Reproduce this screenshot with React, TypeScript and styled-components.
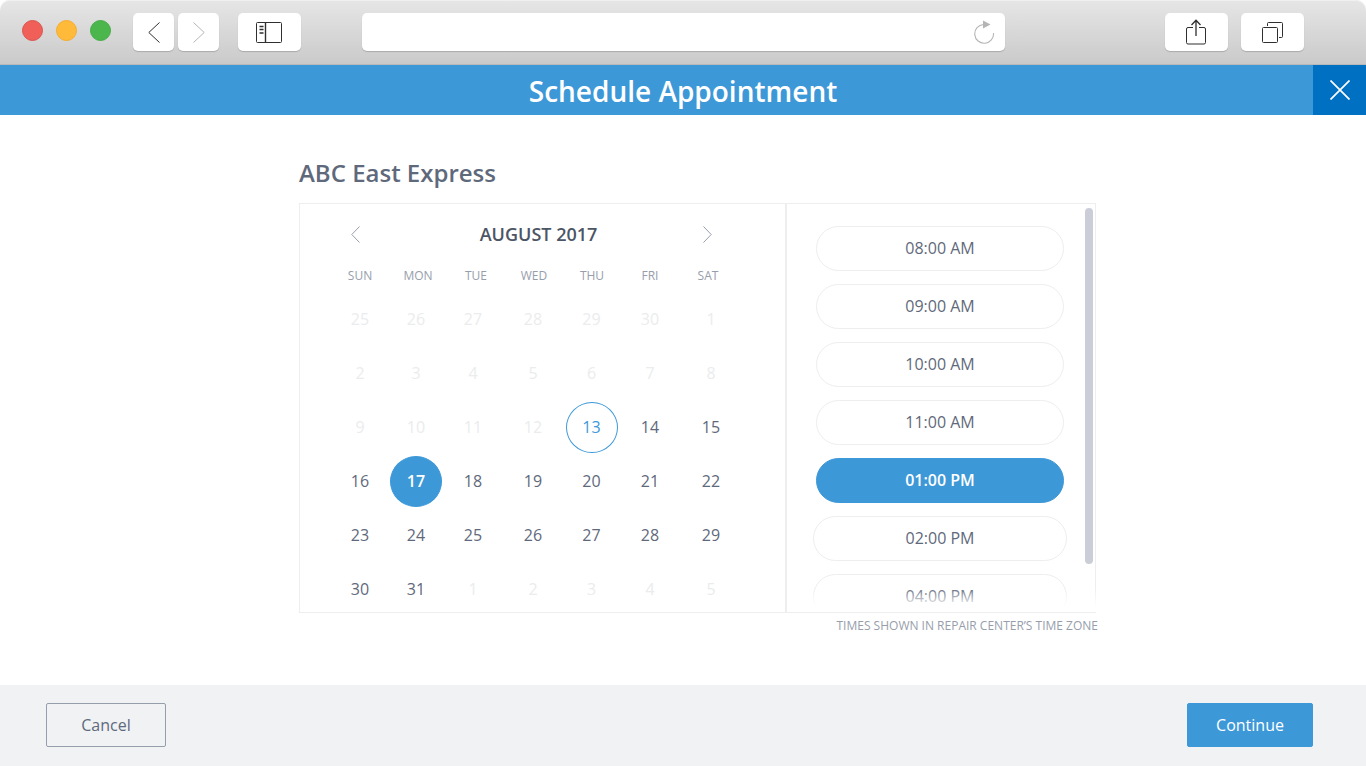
import React, { useState } from "react";
import styled, { createGlobalStyle, css } from "styled-components";

const color = {
  blue: "#3d98d8",
  deepBlue: "#0071c2",
  ink: "#4c5566",
  text: "#5f697c",
  muted: "#979eab",
  faint: "#ebeced",
  line: "#eeeeef",
  footer: "#f0f2f4",
};

const GlobalStyle = createGlobalStyle`
  * { box-sizing: border-box; }
  body {
    margin: 0;
    background: #fff;
    color: ${color.text};
    font-family: "Open Sans", "Noto Sans", sans-serif;
    font-size: 16px;
  }
  button, input { font: inherit; color: inherit; }
  button { padding: 0; border: 0; background: none; cursor: pointer; }
`;

const Page = styled.div`
  display: flex;
  flex-direction: column;
  min-height: 100vh;
`;

/* Browser chrome */

const Chrome = styled.header`
  display: flex;
  align-items: center;
  height: 65px;
  padding: 0 62px 0 22px;
  border-bottom: 1px solid #b9b9b9;
  border-radius: 10px 10px 0 0;
  background: linear-gradient(#e6e6e6, #cacaca);
  box-shadow: inset 0 1px 0 #f0f0f0;
`;

const Lights = styled.div`
  display: flex;
  gap: 13px;
  margin-right: 22px;
  padding-bottom: 3px;
`;

const Light = styled.button<{ $fill: string; $edge: string }>`
  width: 21px;
  height: 21px;
  border: 1px solid ${(p) => p.$edge};
  border-radius: 50%;
  background: ${(p) => p.$fill};
`;

const ButtonGroup = styled.div<{ $gap: number }>`
  display: flex;
  gap: ${(p) => p.$gap}px;
`;

const chromeBox = css`
  height: 38px;
  border-radius: 5px;
  background: #fff;
  box-shadow: 0 1px 1px rgba(0, 0, 0, 0.18);
`;

const ChromeButton = styled.button<{ $narrow?: boolean }>`
  ${chromeBox}
  display: flex;
  align-items: center;
  justify-content: center;
  width: ${(p) => (p.$narrow ? 41 : 63)}px;
  color: #2f2f2f;

  &:disabled { color: #b5b5b5; }
`;

const SidebarSlot = styled.div`
  margin: 0 61px 0 19px;
`;

const AddressBar = styled.form`
  ${chromeBox}
  display: flex;
  flex: 1;
  align-items: center;
  min-width: 0;
  margin-right: 160px;
  padding: 0 10px 0 12px;
`;

const AddressInput = styled.input`
  flex: 1;
  min-width: 0;
  border: 0;
  outline: 0;
  background: none;
`;

const ReloadButton = styled.button`
  display: flex;
  color: #b5b5b5;
`;

/* Title bar */

const TitleBar = styled.div`
  display: grid;
  grid-template-columns: 53px 1fr 53px;
  grid-template-rows: 50px;
  background: ${color.blue};
  color: #fff;
`;

const Title = styled.h1`
  grid-column: 2;
  margin: 0;
  padding-top: 2px;
  font-size: 28px;
  font-weight: 600;
  line-height: 48px;
  text-align: center;
`;

const CloseButton = styled.button`
  display: flex;
  align-items: center;
  justify-content: center;
  background: ${color.deepBlue};
`;

/* Scheduler */

const Main = styled.main`
  flex: 1;
  width: 100%;
  max-width: 830px;
  margin: 0 auto;
  padding: 40px 0 48px 31px;
`;

const Location = styled.h2`
  margin: 0 0 12px;
  font-size: 24px;
  font-weight: 600;
  line-height: 36px;
`;

const Panel = styled.div`
  display: grid;
  grid-template-columns: 1fr 309px;
  grid-template-rows: 408px;
  margin-right: 2px;
  border: 1px solid ${color.line};
`;

const Calendar = styled.section`
  border-right: 2px solid ${color.line};
  padding: 15px 44px 0 31px;
`;

const MonthBar = styled.div`
  display: flex;
  align-items: center;
  height: 30px;
  padding: 0 29px 0 20px;
`;

const MonthName = styled.h3`
  flex: 1;
  margin: 0;
  padding-left: 14px;
  color: ${color.ink};
  font-size: 18px;
  font-weight: 600;
  line-height: 30px;
  text-align: center;
`;

const ArrowButton = styled.button`
  display: flex;
  color: ${color.muted};
`;

const Days = styled.table`
  display: block;
`;

const DaysHead = styled.thead`
  display: block;
  padding: 19px 0 8px;
`;

const DaysBody = styled.tbody`
  display: block;
  padding-left: 1px;
`;

const WeekdayRow = styled.tr`
  display: grid;
  grid-template-columns: repeat(7, 58px);
`;

const WeekRow = styled.tr`
  display: grid;
  grid-template-columns: 56px 56px 58px 62px 55px 62px 60px;
  height: 54px;
`;

const Weekday = styled.th`
  padding: 0;
  color: ${color.muted};
  font-size: 12px;
  font-weight: 400;
  line-height: 16px;
`;

const DayCell = styled.td`
  display: flex;
  align-items: center;
  justify-content: center;
  padding: 0;
`;

const DayButton = styled.button<{ $today: boolean; $selected: boolean }>`
  width: 52px;
  height: 51px;
  border: 1px solid transparent;
  border-radius: 50%;

  &:disabled { color: ${color.faint}; cursor: default; }

  ${(p) => p.$today && css`
    border-color: ${color.blue};
    color: ${color.blue};
  `}
  ${(p) => p.$selected && css`
    background: ${color.blue};
    border-color: ${color.blue};
    color: #fff;
    font-weight: 600;
  `}
`;

const Times = styled.section`
  position: relative;
  display: flex;
  overflow: hidden;
  padding: 4px 3px 0 26px;
`;

const SlotList = styled.ul`
  display: flex;
  flex: 1;
  flex-direction: column;
  align-items: center;
  gap: 13px;
  margin: 0;
  padding: 18px 0 0;
  list-style: none;
`;

const SlotItem = styled.li<{ $wide: boolean }>`
  width: ${(p) => (p.$wide ? 254 : 248)}px;
`;

const SlotButton = styled.button<{ $selected: boolean }>`
  width: 100%;
  height: 45px;
  padding-bottom: 1px;
  border: 1px solid ${(p) => (p.$selected ? color.blue : color.line)};
  border-radius: 23px;
  background: ${(p) => (p.$selected ? color.blue : "#fff")};
  color: ${(p) => (p.$selected ? "#fff" : color.text)};
  font-weight: ${(p) => (p.$selected ? 600 : 400)};
`;

const ScrollThumb = styled.div`
  width: 8px;
  height: 356px;
  margin-left: 18px;
  border-radius: 4px;
  background: #cbced6;
`;

const Fade = styled.div`
  position: absolute;
  right: 0;
  bottom: 0;
  left: 0;
  height: 24px;
  background: linear-gradient(rgba(255, 255, 255, 0), #fff 80%);
  pointer-events: none;
`;

const Note = styled.p`
  margin: 4px 0 0;
  color: ${color.muted};
  font-size: 12px;
  line-height: 18px;
  text-align: right;
`;

/* Footer */

const Footer = styled.footer`
  display: flex;
  justify-content: space-between;
  height: 81px;
  padding: 18px 53px 0 46px;
  background: ${color.footer};
`;

const ActionButton = styled.button<{ $primary?: boolean }>`
  width: ${(p) => (p.$primary ? 126 : 120)}px;
  height: 44px;
  border: 1px solid ${(p) => (p.$primary ? color.blue : color.muted)};
  border-radius: 2px;
  background: ${(p) => (p.$primary ? color.blue : "transparent")};
  color: ${(p) => (p.$primary ? "#fff" : color.text)};
`;

/* Icons */

const Chevron = ({ dir, w, h }: { dir: "left" | "right"; w: number; h: number }) => (
  <svg width={w} height={h} fill="none" stroke="currentColor" aria-hidden="true">
    <path
      d={
        dir === "left"
          ? `M${w - 0.5} 0.5L0.8 ${h / 2}L${w - 0.5} ${h - 0.5}`
          : `M0.5 0.5L${w - 0.8} ${h / 2}L0.5 ${h - 0.5}`
      }
    />
  </svg>
);

const SidebarIcon = () => (
  <svg width="27" height="21" fill="none" stroke="currentColor" aria-hidden="true">
    <rect x="0.5" y="0.5" width="25" height="20" rx="1" />
    <path d="M9.5 1v19" strokeWidth="1.4" />
    <path d="M3.5 4.5h4M3.500 7.500h4M3.500 11h4" strokeWidth="1.4" />
  </svg>
);

const ReloadIcon = () => (
  <svg width="22" height="24" fill="none" aria-hidden="true">
    <path d="M10.5 4.5A9.4 9.4 0 1 0 20.5 13" stroke="currentColor" strokeWidth="1.1" />
    <path d="M10 0.5L17.5 4.5L10 8.5Z" fill="currentColor" />
  </svg>
);

const ShareIcon = () => (
  <svg width="21" height="26" fill="none" stroke="currentColor" aria-hidden="true">
    <path d="M7 8.500H2A1.500 1.500 0 0 0 0.500 10v13.500A1.500 1.500 0 0 0 2 25h16a1.500 1.500 0 0 0 1.500-1.500V10A1.500 1.500 0 0 0 18 8.500h-5" />
    <path d="M10 1v16M5.500 6L10 1.200L14.500 6" strokeWidth="1.300" />
  </svg>
);

const TabsIcon = () => (
  <svg width="21" height="21" fill="none" stroke="currentColor" aria-hidden="true">
    <rect x="0.500" y="5.500" width="15" height="15" rx="1" />
    <path d="M5.500 4V1.500a1 1 0 0 1 1-1h13a1 1 0 0 1 1 1v13a1 1 0 0 1-1 1H17" />
  </svg>
);

const CloseIcon = () => (
  <svg width="20" height="20" fill="none" stroke="currentColor" aria-hidden="true">
    <path d="M0.500 0.500l19 19M19.500 0.500l-19 19" strokeWidth="1.700" />
  </svg>
);

/* Data */

const lights = [
  { label: "Close window", fill: "#f05f58", edge: "#d9534e" },
  { label: "Minimize window", fill: "#ffba3a", edge: "#f5ab2c" },
  { label: "Zoom window", fill: "#4ab64b", edge: "#45ac46" },
];

const weekdays = ["SUN", "MON", "TUE", "WED", "THU", "FRI", "SAT"];

const weeks = [
  [25, 26, 27, 28, 29, 30, 1],
  [2, 3, 4, 5, 6, 7, 8],
  [9, 10, 11, 12, 13, 14, 15],
  [16, 17, 18, 19, 20, 21, 22],
  [23, 24, 25, 26, 27, 28, 29],
  [30, 31, 1, 2, 3, 4, 5],
];

/* Cell positions, counted from the first cell of the grid */
const TODAY = 18;
const LAST_OPEN = 36;

const slots = [
  { time: "08:00 AM" },
  { time: "09:00 AM" },
  { time: "10:00 AM" },
  { time: "11:00 AM" },
  { time: "01:00 PM" },
  { time: "02:00 PM", wide: true },
  { time: "04:00 PM", wide: true },
];

export default function App() {
  const [day, setDay] = useState(22);
  const [slot, setSlot] = useState("01:00 PM");

  return (
    <Page>
      <GlobalStyle />
      <Chrome>
        <Lights>
          {lights.map((l) => (
            <Light key={l.label} aria-label={l.label} $fill={l.fill} $edge={l.edge} />
          ))}
        </Lights>
        <ButtonGroup $gap={4}>
          <ChromeButton $narrow aria-label="Back">
            <Chevron dir="left" w={12} h={21} />
          </ChromeButton>
          <ChromeButton $narrow disabled aria-label="Forward">
            <Chevron dir="right" w={12} h={21} />
          </ChromeButton>
        </ButtonGroup>
        <SidebarSlot>
          <ChromeButton aria-label="Sidebar">
            <SidebarIcon />
          </ChromeButton>
        </SidebarSlot>
        <AddressBar onSubmit={(e) => e.preventDefault()}>
          <AddressInput aria-label="Address" />
          <ReloadButton type="button" aria-label="Reload">
            <ReloadIcon />
          </ReloadButton>
        </AddressBar>
        <ButtonGroup $gap={13}>
          <ChromeButton aria-label="Share">
            <ShareIcon />
          </ChromeButton>
          <ChromeButton aria-label="Tabs">
            <TabsIcon />
          </ChromeButton>
        </ButtonGroup>
      </Chrome>

      <TitleBar>
        <Title>Schedule Appointment</Title>
        <CloseButton aria-label="Close">
          <CloseIcon />
        </CloseButton>
      </TitleBar>

      <Main>
        <Location>ABC East Express</Location>
        <Panel>
          <Calendar>
            <MonthBar>
              <ArrowButton aria-label="Previous month">
                <Chevron dir="left" w={9} h={17} />
              </ArrowButton>
              <MonthName>AUGUST 2017</MonthName>
              <ArrowButton aria-label="Next month">
                <Chevron dir="right" w={9} h={17} />
              </ArrowButton>
            </MonthBar>
            <Days>
              <DaysHead>
                <WeekdayRow>
                  {weekdays.map((d) => (
                    <Weekday key={d} scope="col">{d}</Weekday>
                  ))}
                </WeekdayRow>
              </DaysHead>
              <DaysBody>
                {weeks.map((week, w) => (
                  <WeekRow key={w}>
                    {week.map((n, d) => {
                      const index = w * 7 + d;
                      return (
                        <DayCell key={index}>
                          <DayButton
                            disabled={index < TODAY || index > LAST_OPEN}
                            $today={index === TODAY}
                            $selected={index === day}
                            onClick={() => setDay(index)}
                          >
                            {n}
                          </DayButton>
                        </DayCell>
                      );
                    })}
                  </WeekRow>
                ))}
              </DaysBody>
            </Days>
          </Calendar>
          <Times>
            <SlotList>
              {slots.map((s) => (
                <SlotItem key={s.time} $wide={!!s.wide}>
                  <SlotButton $selected={s.time === slot} onClick={() => setSlot(s.time)}>
                    {s.time}
                  </SlotButton>
                </SlotItem>
              ))}
            </SlotList>
            <ScrollThumb />
            <Fade />
          </Times>
        </Panel>
        <Note>TIMES SHOWN IN REPAIR CENTER’S TIME ZONE</Note>
      </Main>

      <Footer>
        <ActionButton>Cancel</ActionButton>
        <ActionButton $primary>Continue</ActionButton>
      </Footer>
    </Page>
  );
}
